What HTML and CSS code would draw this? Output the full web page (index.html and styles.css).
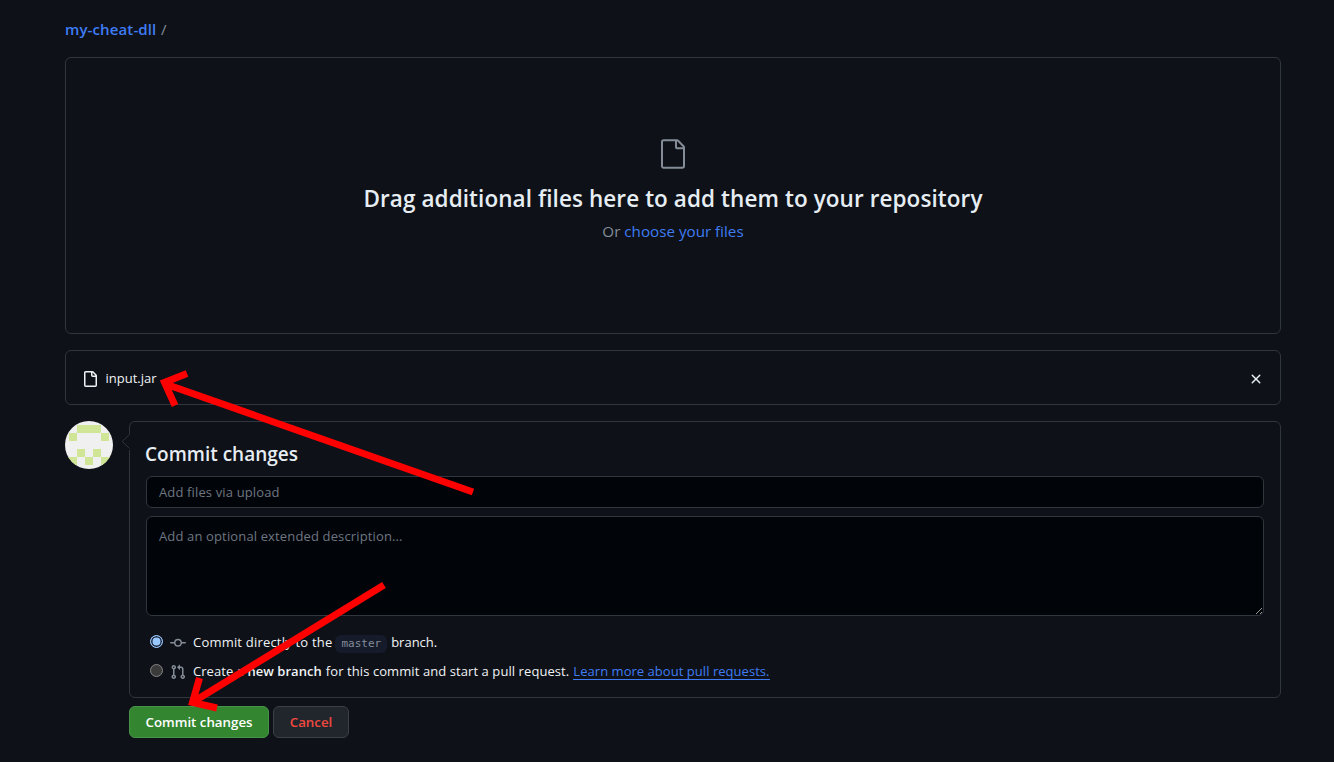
FILE: index.html
```html
<!DOCTYPE html>
<html lang="en">
<head>
<meta charset="utf-8">
<title>Upload files</title>
<link rel="stylesheet" href="styles.css">
</head>
<body>
<main class="page">
  <nav class="breadcrumb"><a class="t-repo" href="#">my-cheat-dll</a><span class="slash">/</span></nav>

  <section class="dropzone">
    <svg class="drop-icon" width="32" height="32" viewBox="0 0 24 24" fill="currentColor"><path d="M3 3a2 2 0 0 1 2-2h9.982a2 2 0 0 1 1.414.586l4.018 4.018A2 2 0 0 1 21 7.018V21a2 2 0 0 1-2 2H4.750A1.750 1.750 0 0 1 3 21.250Zm2-.5a.5.5 0 0 0-.5.5v18.250c0 .138.112.250.250.250H19a.5.5 0 0 0 .5-.5V8.500h-4a2 2 0 0 1-2-2v-4Zm10 0v4a.5.5 0 0 0 .5.5h4a.5.5 0 0 0-.146-.336l-4.018-4.018A.5.5 0 0 0 15 2.500Z"/></svg>
    <h2 class="drop-title"><span class="t-drop">Drag additional files here to add them to your repository</span></h2>
    <p class="drop-sub"><span class="t-sub">Or <a href="#">choose your files</a></span></p>
  </section>

  <section class="file-row">
    <svg class="file-icon" width="16" height="16" viewBox="0 0 16 16" fill="currentColor"><path d="M2 1.750C2 .784 2.784 0 3.750 0h6.586c.464 0 .909.184 1.237.513l2.914 2.914c.329.328.513.773.513 1.237v9.586A1.750 1.750 0 0 1 13.250 16h-9.500A1.750 1.750 0 0 1 2 14.250Zm1.750-.250a.250.250 0 0 0-.250.250v12.500c0 .138.112.250.250.250h9.500a.250.250 0 0 0 .250-.250V6h-2.750A1.750 1.750 0 0 1 9 4.250V1.500Zm6.750.062V4.250c0 .138.112.250.250.250h2.688l-.011-.013-2.914-2.914-.013-.011Z"/></svg>
    <span class="file-name">input.jar</span>
    <button class="remove" aria-label="Remove"><svg width="16" height="16" viewBox="0 0 16 16" fill="currentColor"><path d="M3.720 3.720a.750.750 0 0 1 1.060 0L8 6.940l3.220-3.220a.750.750 0 0 1 1.060 1.060L9.060 8l3.220 3.220a.750.750 0 0 1-1.060 1.060L8 9.060l-3.220 3.220a.750.750 0 0 1-1.060-1.060L6.940 8 3.720 4.780a.750.750 0 0 1 0-1.060Z"/></svg></button>
  </section>

  <section class="commit">
    <svg class="avatar" width="48" height="48" viewBox="0 0 48 48"><path fill="#f0f0f0" d="M0 0h48v48H0z"/><path fill="#d0e596" d="M12 4h24v8H12zM4 12h8v8H4zM36 12h8v8h-8zM12 28h8v8h-8zM28 28h8v8h-8zM0 36h12v8H0zM20 36h8v8h-8zM36 36h12v8H36z"/></svg>
    <div class="commit-main">
      <div class="box">
        <svg class="caret" width="9" height="16" viewBox="0 0 9 16"><path d="M9 0v16h-1L1 8.500 8 1V0z" fill="#0e1117"/><path d="M8.500 .5 1.200 7.500 8.500 14.500" fill="none" stroke="#30363d"/></svg>
        <h3 class="box-title"><span class="t-box">Commit changes</span></h3>
        <input class="field summary" placeholder="Add files via upload">
        <textarea class="field details" placeholder="Add an optional extended description..."></textarea>
        <label class="choice">
          <span class="radio on"></span>
          <svg width="16" height="16" viewBox="0 0 16 16" fill="currentColor"><path d="M11.930 8.500a4.002 4.002 0 0 1-7.860 0H.750a.750.750 0 0 1 0-1.500h3.320a4.002 4.002 0 0 1 7.860 0h3.320a.750.750 0 0 1 0 1.500Zm-1.430-.750a2.500 2.500 0 1 0-5 0 2.500 2.500 0 0 0 5 0Z"/></svg>
          <span class="t-c1">Commit directly to the</span><code>master</code><span class="t-c2">branch.</span>
        </label>
        <label class="choice">
          <span class="radio"></span>
          <svg width="16" height="16" viewBox="0 0 16 16" fill="currentColor"><path d="M1.500 3.250a2.250 2.250 0 1 1 3 2.122v5.256a2.251 2.251 0 1 1-1.500 0V5.372A2.250 2.250 0 0 1 1.500 3.250Zm5.677-.177L9.573.677A.250.250 0 0 1 10 .854V2.500h1A2.500 2.500 0 0 1 13.500 5v5.628a2.251 2.251 0 1 1-1.500 0V5a1 1 0 0 0-1-1h-1v1.646a.250.250 0 0 1-.427.177L7.177 3.427a.250.250 0 0 1 0-.354ZM3.750 2.500a.750.750 0 1 0 0 1.500.750.750 0 0 0 0-1.500Zm0 9.500a.750.750 0 1 0 0 1.500.750.750 0 0 0 0-1.500Zm8.250.750a.750.750 0 1 0 1.500 0 .750.750 0 0 0-1.500 0Z"/></svg>
          <span class="t-d1">Create a <b>new branch</b></span><span class="t-d2">for this commit and start a pull request.</span><a class="learn" href="#">Learn more about pull requests.</a>
        </label>
      </div>
      <div class="actions">
        <button class="btn primary">Commit changes</button>
        <button class="btn danger">Cancel</button>
      </div>
    </div>
  </section>
</main>
<svg class="arrows" width="1334" height="762" viewBox="0 0 1334 762" fill="none" stroke="#f00" stroke-width="7"><path d="M473 492 164 383.500M187 373.500 164.500 382.500 175 405.500M384 585 193 702M199.500 678 192.500 702.500 217 708"/></svg>
</body>
</html>
```

FILE: styles.css
```css
* { box-sizing: border-box; }
body {
  margin: 0;
  height: 762px;
  overflow: hidden;
  background: #0e1117;
  color: #f0f3f6;
  font: 14px/21px "Open Sans", "Noto Sans", sans-serif;
}
a { color: #3f7cf4; text-decoration: none; }
.page { width: 1216px; margin-left: 65px; padding-top: 17px; }
.breadcrumb { display: flex; gap: 5px; height: 24px; line-height: 24px; white-space: nowrap; color: #848d97; }
.t-repo { font-weight: 600; font-size: 15px; letter-spacing: .12px; width: 91px; }
.slash { font-size: 15px; }

.dropzone {
  display: flex; flex-direction: column; align-items: center;
  height: 277px; margin-top: 16px; padding-top: 80px;
  border: 1px solid #30363d; border-radius: 6px;
}
.drop-icon { color: #848d97; flex: none; }
.drop-title { margin: 11px 0 0; height: 36px; font-size: 22.500px; line-height: 36px; font-weight: 600; letter-spacing: .08px; white-space: nowrap; color: #e6edf3; }
.drop-sub { margin: 2px 0 0; font-size: 15.200px; line-height: 24px; color: #848d97; white-space: nowrap; }

.file-row {
  display: flex; align-items: center;
  height: 55px; margin-top: 16px; padding: 0 16px;
  border: 1px solid #30363d; border-radius: 6px;
}
.file-icon { margin: 2px 7.500px 0 0; }
.file-name { margin-top: 2px; font-size: 13px; }
.remove { display: flex; margin: 2px 0 0 auto; padding: 0; border: 0; background: none; color: #e6edf3; }

.commit { display: flex; gap: 16px; margin-top: 16px; }
.avatar { border-radius: 50%; flex: none; }
.commit-main { flex: 1; }
.box {
  position: relative;
  height: 277px; padding: 16px;
  border: 1px solid #30363d; border-radius: 6px;
}
.caret { position: absolute; left: -9px; top: 12px; }
.box-title { margin: 2px 0 8px -1px; height: 28px; font-size: 19px; line-height: 28px; font-weight: 600; white-space: nowrap; color: #e6edf3; }
.field {
  display: block; width: 1118px; padding: 5px 12px;
  border: 1px solid #30363d; border-radius: 6px;
  background: #010409; color: #e6edf3;
  font: 13px/20px "Open Sans", "Noto Sans", sans-serif;
  letter-spacing: .14px;
  color-scheme: dark; outline: none;
}
.field::placeholder { color: #6e7681; opacity: 1; }
.summary { height: 32px; }
.details { height: 100px; margin: 8px 0 12px; padding-top: 9px; resize: vertical; }
.choice { display: flex; align-items: center; height: 29px; padding-left: 4px; font-size: 13px; white-space: nowrap; }
.choice svg { margin: 1px 7px 0; color: #848d97; flex: none; }
.radio { width: 13px; height: 13px; border: 1px solid #858585; border-radius: 50%; background: #3b3b3b; flex: none; margin-top: -2px; }
.radio.on { border-color: #99c8ff; background: #99c8ff; box-shadow: inset 0 0 0 1.500px #1c2737; }
.t-c1 { letter-spacing: .2px; }
code { margin: 2px 4px 0 3px; padding: 0 6px; border-radius: 6px; background: #161b2b; color: #848d97; font: 11px/18px "DejaVu Sans Mono", monospace; }
.t-d1 { margin-right: 4px; letter-spacing: .05px; }
.t-d1 b { font-weight: 600; }
.t-d2 { letter-spacing: .08px; }
.learn { height: 18px; margin: 0 0 2px 4px; line-height: 18px; letter-spacing: .04px; border-bottom: 1px solid #3f7cf4; }

.actions { display: flex; gap: 4px; margin-top: 8px; }
.btn { height: 32px; padding: 0; border: 1px solid #3b4047; border-radius: 6px; font: 600 13.300px/20px "Open Sans", "Noto Sans", sans-serif; white-space: nowrap; }
.primary { width: 140px; background: #348530; border-color: #48934a; color: #fff; }
.danger { width: 76px; background: #21262d; color: #f0493f; }
.arrows { position: absolute; left: 0; top: 0; pointer-events: none; }
```
